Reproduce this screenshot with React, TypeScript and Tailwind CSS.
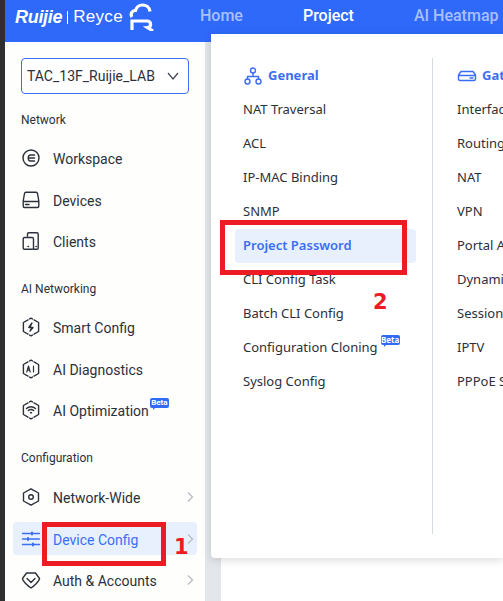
const roboto = "font-['Roboto',sans-serif]";
const logoFont = "font-['Liberation_Sans',sans-serif]";
const markFont = "font-['DejaVu_Sans',sans-serif]";

function Ico({ children, color = '#2b303b' }: { children: React.ReactNode; color?: string }) {
  return (
    <svg width="20" height="20" viewBox="0 0 20 20" fill="none" stroke={color} strokeWidth="1.4" strokeLinecap="round" strokeLinejoin="round" className="shrink-0">
      {children}
    </svg>
  );
}

function Hex({ children }: { children?: React.ReactNode }) {
  return (
    <Ico>
      <path d="M8.600 1.900 10 1.200 11.400 1.900M13 2.900 17.600 5.500V14.500L13 17.100M11.400 18.100 10 18.800 8.600 18.100M7 17.100 2.400 14.500V5.500L7 2.900" />
      {children}
    </Ico>
  );
}

function Chevron() {
  return (
    <svg width="8" height="12" viewBox="0 0 8 12" fill="none" stroke="#b8bcc4" strokeWidth="1.3" className="absolute right-[3px]">
      <path d="M2 1.500 6.500 6 2 10.500" />
    </svg>
  );
}

function Beta({ className }: { className: string }) {
  return (
    <span className={`absolute flex h-[10px] w-[19px] items-center justify-center rounded-[2px] bg-[#2f6bf5] text-[8px] leading-none font-bold text-white ${className}`}>
      Beta
      <span className="absolute -bottom-[2px] left-[3px] h-0 w-0 border-t-[3px] border-r-[3px] border-t-[#2f6bf5] border-r-transparent" />
    </span>
  );
}

function SideItem({ icon, label, arrow, active, beta }: { icon: React.ReactNode; label: string; arrow?: boolean; active?: boolean; beta?: boolean }) {
  return (
    <div className={`relative my-1 flex h-[34px] items-center gap-3 rounded-[4px] px-2 ${active ? 'bg-[#e8f0fd] text-[#3b6ef6]' : 'text-[#2b303b]'}`}>
      {icon}
      <span className="relative pt-[2px] text-sm">
        {label}
        {beta && <Beta className="-top-[1px] -right-[20px]" />}
      </span>
      {arrow && <Chevron />}
    </div>
  );
}

function SideLabel({ children, className }: { children: string; className: string }) {
  return <div className={`px-2 text-xs leading-5 text-[#2b303b] ${className}`}>{children}</div>;
}

function MenuItem({ label, active, beta }: { label: string; active?: boolean; beta?: boolean }) {
  return (
    <div className={`flex h-[34px] items-center rounded-[4px] px-2 text-[13px] whitespace-nowrap ${active ? 'bg-[#e8f0fd] font-semibold text-[#3b6ef6]' : 'text-[#2b303b]'}`}>
      <span className="relative">
        {label}
        {beta && <Beta className="-top-[3px] -right-[22px]" />}
      </span>
    </div>
  );
}

const general = ['NAT Traversal', 'ACL', 'IP-MAC Binding', 'SNMP', 'Project Password', 'CLI Config Task', 'Batch CLI Config', 'Configuration Cloning', 'Syslog Config'];
const gateway = ['Interface', 'Routing', 'NAT', 'VPN', 'Portal Auth', 'Dynamic DNS', 'Session Limit', 'IPTV', 'PPPoE Server'];

export default function App() {
  return (
    <div className="relative flex h-[601px] w-[503px] overflow-hidden bg-[#2f2f2f] pl-[5px] font-['Noto_Sans',sans-serif]">
      <div className="flex min-w-0 flex-1 flex-col">
        {/* top bar */}
        <header className="flex h-[42px] shrink-0 bg-[#2f69fa] pl-[10px]">
          <div className="flex h-[34px] w-[185px] shrink-0 items-center">
            <span className={`${logoFont} text-[18px] font-bold tracking-[-0.3px] text-white italic`}>Ruijie</span>
            <span className="mx-[5px] h-[13px] w-px bg-white" />
            <span className={`${logoFont} text-[17px] tracking-[0.3px] text-white`}>Reyce</span>
            <svg width="26" height="28" viewBox="0 0 26 28" fill="none" stroke="white" strokeWidth="3.2" className="ml-[6px] shrink-0">
              <path d="M3 14C1 11 3 7.500 6.500 7.500 7.500 4 10.500 2 13.500 2 17.500 2 20.500 4.500 21 8.500M3 27V18H18C22.500 18 23 24 18.500 24.500L24 28" />
            </svg>
          </div>
          <nav className={`${roboto} flex h-[32px] items-center gap-[60px] text-base font-medium whitespace-nowrap text-[#a9c0fd]`}>
            <span>Home</span>
            <span className="text-white">Project</span>
            <span>AI Heatmap</span>
          </nav>
        </header>

        <div className="flex min-h-0 flex-1">
          {/* sidebar */}
          <aside className={`${roboto} flex w-[200px] shrink-0 flex-col bg-[#fefefc] px-2`}>
            <div className="mx-2 mt-4 flex h-9 shrink-0 items-center justify-between rounded-[4px] border border-[#3b6ef6] bg-white pr-[9px] pl-[5px]">
              <span className="text-sm whitespace-nowrap text-[#2b303b]">TAC_13F_Ruijie_LAB</span>
              <svg width="12" height="8" viewBox="0 0 12 8" fill="none" stroke="#3f4652" strokeWidth="1.2" className="shrink-0">
                <path d="M1 1 6 7 11 1" />
              </svg>
            </div>

            <SideLabel className="mt-4 mb-[7px]">Network</SideLabel>
            <SideItem label="Workspace" icon={<Ico><circle cx="10" cy="10" r="8" /><path d="M13.500 7H9.500C6.500 7 6.500 13 9.500 13H13.500M8 10H13.500" /></Ico>} />
            <SideItem label="Devices" icon={<Ico><path d="M2.200 11 3.500 3.500C3.700 2.800 4.300 2.300 5 2.300H15C15.700 2.300 16.300 2.800 16.500 3.500L17.800 11V16C17.800 16.800 17.300 17.500 16.500 17.500H3.500C2.700 17.500 2.200 16.800 2.200 16ZM2.200 11.500H17.800M4.500 14.500H8" /></Ico>} />
            <SideItem label="Clients" icon={<Ico><path d="M6.500 5V3C6.500 2.300 7 1.800 7.700 1.800H16C16.700 1.800 17.200 2.300 17.200 3V17C17.200 17.700 16.700 18.200 16 18.200H12.500M3.500 6.500H11C11.800 6.500 12.500 7 12.500 8V17C12.500 17.700 11.800 18.200 11 18.200H3.500C2.700 18.200 2.200 17.700 2.200 17V8C2.200 7 2.700 6.500 3.500 6.500ZM7 15.500H7.500M15 15.500H15.300" /></Ico>} />

            <SideLabel className="mt-[17px] mb-[7px]">AI Networking</SideLabel>
            <SideItem label="Smart Config" icon={<Hex><path d="M11 6 7.800 10.500H12L9 14" fill="#2b303b" /></Hex>} />
            <SideItem label="AI Diagnostics" icon={<Hex><path d="M5.800 13 7.500 7 9.200 13M6.400 11.200H8.600M12.500 7V13" strokeWidth="1.2" /></Hex>} />
            <SideItem label="AI Optimization" beta icon={<Hex><path d="M5.500 8.500C8 6.200 12 6.200 14.500 8.500M7.300 10.500C8.800 9.300 11.200 9.300 12.700 10.500M9.500 12.800H10.500" /></Hex>} />

            <SideLabel className="mt-[17px] mb-2">Configuration</SideLabel>
            <SideItem label="Network-Wide" arrow icon={<Ico><path d="M10 1.800 17.500 6V14L10 18.200 2.500 14V6Z" /><circle cx="10" cy="10" r="2.300" /></Ico>} />
            <SideItem label="Device Config" arrow active icon={<Ico color="#3b6ef6"><path d="M1.500 4.500H18.500M1.500 10H18.500M1.500 15.500H18.500" /><path d="M11 3.500V5.500M7 9V11M12 14.500V16.500" strokeWidth="2" /></Ico>} />
            <SideItem label="Auth & Accounts" arrow icon={<Ico><path d="M5.500 3H14.500L18.500 8.500C18.500 11 13 16 10 18 7 16 1.500 11 1.500 8.500ZM6 8.500 10 12.500 14 8.500" /></Ico>} />
          </aside>

          <div className="w-4 shrink-0 bg-[#e3e6ea]" />
          <main className="flex-1 bg-white" />
        </div>
      </div>

      {/* project dropdown */}
      <div className="absolute top-[34px] left-[211px] flex h-[524px] w-[292px] rounded-bl-[4px] bg-white pt-6 shadow-[0_2px_10px_rgba(0,0,0,0.15)]">
        <div className="mt-px ml-6 w-[181px] shrink-0">
          <div className="flex h-[34px] items-center gap-[5px] px-2 text-[13px] font-bold text-[#3b6ef6]">
            <Ico color="#3b6ef6"><circle cx="10" cy="4.500" r="2.500" /><circle cx="4.500" cy="15.500" r="2.500" /><circle cx="15.500" cy="15.500" r="2.500" /><path d="M10 7V10.500M4.500 13V10.500H15.500V13" /></Ico>
            General
          </div>
          {general.map((g) => (
            <MenuItem key={g} label={g} active={g === 'Project Password'} beta={g === 'Configuration Cloning'} />
          ))}
        </div>
        <div className="ml-4 h-[476px] w-px bg-[#d5dbe3]" />
        <div className="mt-px ml-4 min-w-0 flex-1 overflow-hidden">
          <div className="flex h-[34px] items-center gap-[5px] px-2 text-[13px] font-bold whitespace-nowrap text-[#3b6ef6]">
            <Ico color="#3b6ef6"><path d="M1.500 9 4 5.500H16L18.500 9V13C18.500 14 18 14.500 17 14.500H3C2 14.500 1.500 14 1.500 13ZM1.500 9.500H18.500M13 12H16" /></Ico>
            Gateway
          </div>
          {gateway.map((g) => (
            <MenuItem key={g} label={g} />
          ))}
        </div>
      </div>

      {/* annotations */}
      <div className="absolute top-[522px] left-[42px] h-[44px] w-[124px] border-[5px] border-[#ed1c24]" />
      <div className="absolute top-[220px] left-[220px] h-[55px] w-[187px] border-[5px] border-[#ed1c24]" />
      <span className={`${markFont} absolute top-[533px] left-[174px] text-[21px] leading-[28px] font-bold text-[#ed1c24]`}>1</span>
      <span className={`${markFont} absolute top-[288px] left-[373px] text-[21px] leading-[28px] font-bold text-[#ed1c24]`}>2</span>
    </div>
  );
}
